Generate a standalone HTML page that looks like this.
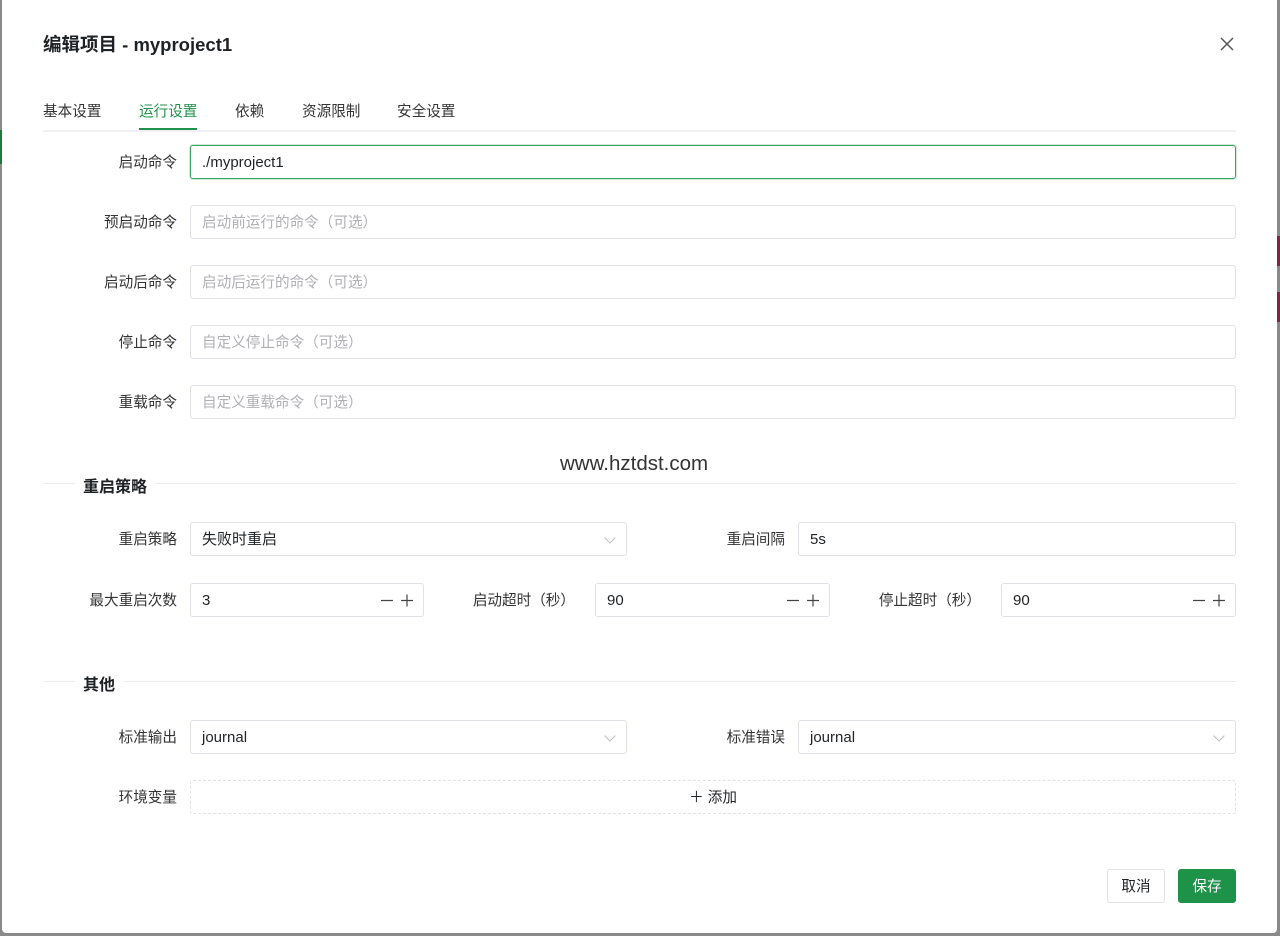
<!DOCTYPE html>
<html><head><meta charset="utf-8"><style>
*{box-sizing:border-box;margin:0;padding:0}
body{width:1280px;height:936px;background:#8a8a8a;position:relative;overflow:hidden;font-family:"Liberation Sans","Noto Sans CJK SC",sans-serif;color:#1f2225}
.m{position:absolute;left:2px;top:0;width:1275px;height:933px;background:#fff;border-radius:0 0 4px 4px}
.a{position:absolute}
.t{left:43px;top:31px;font-size:18.5px;font-weight:bold;color:#1f2225}
.lbl{position:absolute;font-size:14.6px;color:#333;text-align:right;line-height:34px;padding-top:1px}
.in{position:absolute;height:34px;border:1px solid #e0e0e6;border-radius:3px;font-size:15px;line-height:32px;padding-left:11px;padding-top:1px;color:#1f2225}
.ph{color:#b0b0b5;font-size:14.6px}
.tab{position:absolute;top:100px;font-size:14.6px;color:#333}
.sec{position:absolute;font-size:16px;font-weight:bold;color:#1f2225;background:#fff;padding:0 8px}
.hl{position:absolute;left:43px;width:1193px;height:1px;background:#ececf0}
.pm{position:absolute;right:10px;top:10px}
.chev{position:absolute;right:12px;top:11px;width:8px;height:8px;border-right:1px solid #bbb;border-bottom:1px solid #bbb;transform:rotate(45deg)}
</style></head><body>
<div class="a" style="left:0;top:130px;width:3px;height:34px;background:#1e7a3c"></div>
<div class="a" style="left:1277px;top:236px;width:3px;height:30px;background:#8a2040"></div>
<div class="a" style="left:1277px;top:292px;width:3px;height:30px;background:#8a2040"></div>
<div class="m"></div>
<div class="a t">编辑项目 - myproject1</div>
<svg class="a" style="left:1219px;top:36px" width="16" height="16" viewBox="0 0 16 16"><path d="M2 2L14 14M14 2L2 14" stroke="#555" stroke-width="1.5" fill="none"/></svg>
<div class="tab" style="left:43px">基本设置</div>
<div class="tab" style="left:139px;color:#1e9248">运行设置</div>
<div class="tab" style="left:235px">依赖</div>
<div class="tab" style="left:302px">资源限制</div>
<div class="tab" style="left:397px">安全设置</div>
<div class="a" style="left:43px;top:130px;width:1193px;height:2px;background:#f0f0f5"></div>
<div class="a" style="left:139px;top:128px;width:58px;height:2px;background:#1e9248"></div>

<div class="lbl" style="left:60px;width:117px;top:145px">启动命令</div>
<div class="in" style="left:190px;top:145px;width:1046px;border-color:#3aa55e;box-shadow:0 0 0 1px rgba(30,146,72,.2)">./myproject1</div>
<div class="lbl" style="left:60px;width:117px;top:205px">预启动命令</div>
<div class="in ph" style="left:190px;top:205px;width:1046px">启动前运行的命令（可选）</div>
<div class="lbl" style="left:60px;width:117px;top:265px">启动后命令</div>
<div class="in ph" style="left:190px;top:265px;width:1046px">启动后运行的命令（可选）</div>
<div class="lbl" style="left:60px;width:117px;top:325px">停止命令</div>
<div class="in ph" style="left:190px;top:325px;width:1046px">自定义停止命令（可选）</div>
<div class="lbl" style="left:60px;width:117px;top:385px">重载命令</div>
<div class="in ph" style="left:190px;top:385px;width:1046px">自定义重载命令（可选）</div>

<div class="a" style="left:560px;top:452px;font-size:20.5px;color:#333">www.hztdst.com</div>
<div class="hl" style="top:483px"></div>
<div class="sec" style="left:75px;top:473px">重启策略</div>
<div class="lbl" style="left:60px;width:117px;top:522px">重启策略</div>
<div class="in" style="left:190px;top:522px;width:437px">失败时重启<div class="chev"></div></div>
<div class="lbl" style="left:660px;width:125px;top:522px">重启间隔</div>
<div class="in" style="left:798px;top:522px;width:438px">5s</div>
<div class="lbl" style="left:40px;width:137px;top:583px">最大重启次数</div>
<div class="in" style="left:190px;top:583px;width:234px">3<svg class="pm" width="32" height="13" viewBox="0 0 32 13"><path d="M0 6.5H12M20 6.5H32M26 0.5V12.5" stroke="#444" stroke-width="1.2"/></svg></div>
<div class="lbl" style="left:440px;width:135px;top:583px">启动超时（秒）</div>
<div class="in" style="left:595px;top:583px;width:235px">90<svg class="pm" width="32" height="13" viewBox="0 0 32 13"><path d="M0 6.5H12M20 6.5H32M26 0.5V12.5" stroke="#444" stroke-width="1.2"/></svg></div>
<div class="lbl" style="left:846px;width:135px;top:583px">停止超时（秒）</div>
<div class="in" style="left:1001px;top:583px;width:235px">90<svg class="pm" width="32" height="13" viewBox="0 0 32 13"><path d="M0 6.5H12M20 6.5H32M26 0.5V12.5" stroke="#444" stroke-width="1.2"/></svg></div>

<div class="hl" style="top:681px"></div>
<div class="sec" style="left:75px;top:671px">其他</div>
<div class="lbl" style="left:60px;width:117px;top:720px">标准输出</div>
<div class="in" style="left:190px;top:720px;width:437px">journal<div class="chev"></div></div>
<div class="lbl" style="left:660px;width:125px;top:720px">标准错误</div>
<div class="in" style="left:798px;top:720px;width:438px">journal<div class="chev"></div></div>
<div class="lbl" style="left:60px;width:117px;top:780px">环境变量</div>
<div class="in" style="left:190px;top:780px;width:1046px;border-style:dashed;text-align:center;padding:1px 0 0;font-size:14.6px">＋ 添加</div>

<div class="in" style="left:1107px;top:869px;width:58px;padding:1px 0 0;text-align:center;font-size:14.6px">取消</div>
<div class="in" style="left:1178px;top:869px;width:58px;padding:1px 0 0;text-align:center;background:#1e9248;border-color:#1e9248;color:#fff;font-size:14.6px">保存</div>
</body></html>
